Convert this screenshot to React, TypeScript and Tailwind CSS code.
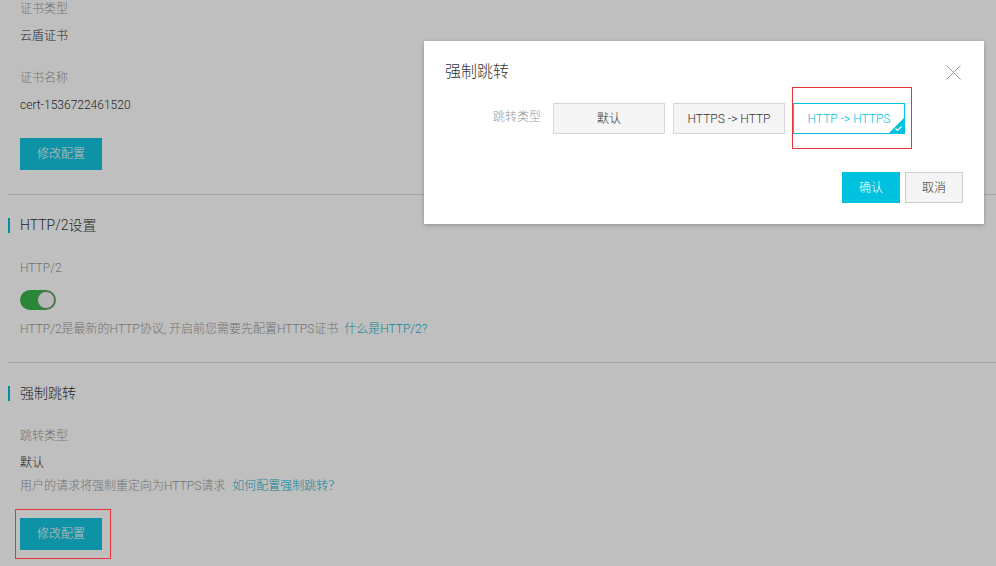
import { useState } from 'react';

const FONT = { fontFamily: 'Roboto, "Noto Sans CJK SC", sans-serif' };

function SectionTitle({ children }: { children: React.ReactNode }) {
  return (
    <div className="flex items-center h-5">
      <span className="w-[2px] h-[15px] bg-[#00c1de]" />
      <span className="ml-[10px] text-[14px] text-[#333]">{children}</span>
    </div>
  );
}

function Toggle({ on }: { on: boolean }) {
  return (
    <div className={`w-9 h-5 rounded-full flex items-center ${on ? 'bg-[#39b54a] justify-end' : 'bg-[#ccc] justify-start'}`}>
      <span className="w-[18px] h-[18px] mr-px rounded-full bg-[#f4f4f4] border border-[#888]" />
    </div>
  );
}

const redirectTypes = ['默认', 'HTTPS -> HTTP', 'HTTP -> HTTPS'];

export default function App() {
  const [selected, setSelected] = useState('HTTP -> HTTPS');

  return (
    <div className="relative w-[996px] h-[566px] overflow-hidden bg-white text-[12px] leading-5 font-light" style={FONT}>
      {/* page */}
      <div className="pl-2">
        <div className="pl-3 -mt-px">
          <div className="text-[#999]">证书类型</div>
          <div className="mt-[7px] text-[#333]">云盾证书</div>
          <div className="mt-[22px] text-[#999]">证书名称</div>
          <div className="mt-[7px] text-[#333]">cert-1536722461520</div>
          <button className="mt-[23px] w-[82px] h-8 bg-[#13c3dc] text-white text-[12px]">修改配置</button>
        </div>
        <div className="mt-6 h-px bg-[#ddd]" />

        <div className="mt-5">
          <SectionTitle>HTTP/2设置</SectionTitle>
        </div>
        <div className="pl-3">
          <div className="mt-[23px] text-[#999]">HTTP/2</div>
          <div className="mt-3">
            <Toggle on />
          </div>
          <div className="mt-[9px] text-[#999]">
            HTTP/2是最新的HTTP协议, 开启前您需要先配置HTTPS证书
            <a className="ml-[6px] text-[#13b4c9]">什么是HTTP/2?</a>
          </div>
        </div>
        <div className="mt-[23px] h-px bg-[#ddd]" />

        <div className="mt-5">
          <SectionTitle>强制跳转</SectionTitle>
        </div>
        <div className="pl-3">
          <div className="mt-[23px] text-[#999]">跳转类型</div>
          <div className="mt-[7px] text-[#333]">默认</div>
          <div className="mt-[3px] text-[#999]">
            用户的请求将强制重定向为HTTPS请求
            <a className="ml-[7px] text-[#13b4c9]">如何配置强制跳转？</a>
          </div>
          <button className="mt-[22px] w-[82px] h-8 bg-[#13c3dc] text-white text-[12px]">修改配置</button>
        </div>
      </div>

      {/* mask */}
      <div className="absolute inset-0 z-40 bg-black/25" />

      {/* annotation over the lower button */}
      <div className="absolute z-[60] left-[15px] top-[509px] w-[96px] h-[50px] border border-[#e8343a] pointer-events-none" />

      {/* dialog */}
      <div className="absolute z-50 left-[424px] top-[41px] w-[560px] bg-white shadow-[0_1px_4px_rgba(0,0,0,0.25)] px-[21px] pt-[21px] pb-[21px]">
        <div className="flex items-center justify-between h-5">
          <span className="text-[16px] text-[#333]">强制跳转</span>
          <svg width="15" height="15" viewBox="0 0 15 15" className="mr-[2px]">
            <path d="M0.5 0.5L14.5 14.5M14.5 0.5L0.5 14.5" stroke="#999" strokeWidth="1" fill="none" />
          </svg>
        </div>
        <div className="mt-[21px] flex items-start">
          <span className="w-24 text-right text-[#999] leading-[28px]">跳转类型</span>
          <div className="ml-3 flex gap-2">
            {redirectTypes.map(t => {
              const active = t === selected;
              return (
                <div key={t} className="relative">
                  <button
                    onClick={() => setSelected(t)}
                    className={`relative w-[112px] h-[31px] text-[12px] border overflow-hidden ${
                      active ? 'bg-white border-[#00c1de] text-[#00c1de]' : 'bg-[#f5f5f5] border-[#d6d6d6] text-[#333]'
                    }`}
                  >
                    {t}
                    {active && (
                      <svg width="15" height="15" viewBox="0 0 15 15" className="absolute right-0 bottom-0">
                        <path d="M15 0L15 15L0 15Z" fill="#00c1de" />
                        <path d="M6.5 10.5L8.5 12.5L12.5 8.5" stroke="#fff" strokeWidth="1.2" fill="none" />
                      </svg>
                    )}
                  </button>
                  {active && (
                    <span className="absolute -left-px -top-4 -right-[7px] -bottom-[15px] border border-[#e8343a] pointer-events-none" />
                  )}
                </div>
              );
            })}
          </div>
        </div>
        <div className="mt-[38px] flex justify-end gap-[5px]">
          <button className="w-[58px] h-[31px] bg-[#00c1de] text-white text-[12px]">确认</button>
          <button className="w-[58px] h-[31px] bg-[#f5f5f5] border border-[#ccc] text-[#333] text-[12px]">取消</button>
        </div>
      </div>
    </div>
  );
}
